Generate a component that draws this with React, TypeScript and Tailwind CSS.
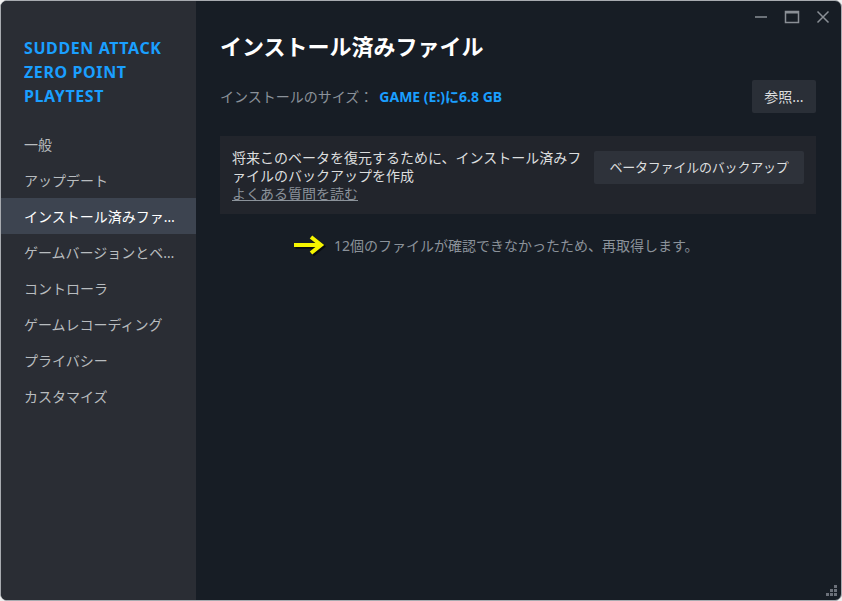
import React from 'react';

const navItems = [
  '一般',
  'アップデート',
  'インストール済みファイル',
  'ゲームバージョンとベータ',
  'コントローラ',
  'ゲームレコーディング',
  'プライバシー',
  'カスタマイズ',
];

const font = { fontFamily: '"Noto Sans", "Noto Sans CJK JP", sans-serif' };

const App = () => {
  return (
    <div className='w-[842px] h-[601px] bg-[#f0f0f0]' style={font}>
      <div className='w-full h-full flex rounded-[7px] overflow-hidden border border-[#a8abb0] bg-[#171d25]'>
        {/* サイドバー */}
        <div className='w-[195px] shrink-0 bg-[#2a2d34] flex flex-col'>
          <div className='pl-[23px] pt-[35px] text-[16px] leading-[24px] font-bold text-[#1a9fff] tracking-[0.6px]'>
            <div>SUDDEN ATTACK</div>
            <div>ZERO POINT</div>
            <div>PLAYTEST</div>
          </div>
          <div className='mt-[18px] flex flex-col'>
            {navItems.map((item, index) => (
              <div
                key={item}
                className={
                  index === 2
                    ? 'h-[36px] flex items-center pl-[23px] pr-[20px] bg-[#3d4450] text-white text-[14px]'
                    : 'h-[36px] flex items-center pl-[23px] pr-[20px] text-[#b8bcbf] text-[14px]'
                }
              >
                <span className='truncate'>{item}</span>
              </div>
            ))}
          </div>
        </div>

        {/* メイン */}
        <div className='flex-1 min-w-0 flex flex-col relative'>
          <div className='absolute top-[7px] right-[9px] flex items-center gap-[13px] text-[#8a8f96]'>
            <svg width='18' height='18' viewBox='0 0 18 18'>
              <line x1='3' y1='9' x2='15' y2='9' stroke='currentColor' strokeWidth='1.5' />
            </svg>
            <svg width='18' height='18' viewBox='0 0 18 18'>
              <rect x='2.5' y='3.5' width='13' height='11' fill='none' stroke='currentColor' strokeWidth='1.5' />
              <line x1='2.5' y1='4.5' x2='15.5' y2='4.5' stroke='currentColor' strokeWidth='2' />
            </svg>
            <svg width='18' height='18' viewBox='0 0 18 18'>
              <path d='M3.5 3.5 L14.5 14.5 M14.5 3.5 L3.5 14.5' stroke='currentColor' strokeWidth='1.5' />
            </svg>
          </div>

          <div className='pl-[24px] pr-[25px] pt-[29px]'>
            <h1 className='text-[22px] leading-[32px] font-bold text-white'>インストール済みファイル</h1>

            <div className='mt-[18px] flex items-center justify-between'>
              <div className='text-[14px] text-[#8b929a] flex items-center'>
                <span>インストールのサイズ：</span>
                <span className='ml-[6px] font-bold text-[#1a9fff]'>GAME (E:)に6.8 GB</span>
              </div>
              <button className='h-[33px] w-[64px] bg-[#2a2f37] rounded-[2px] text-[14px] text-[#dcdedf]'>
                参照...
              </button>
            </div>

            <div className='mt-[23px] h-[78px] bg-[#22252c] flex items-start pl-[12px] pr-[12px] pt-[13px]'>
              <div className='w-[352px] shrink-0 text-[14px] leading-[18px] text-[#dcdedf]'>
                <div>将来このベータを復元するために、インストール済みファイルのバックアップを作成</div>
                <div className='text-[#8b929a] underline'>よくある質問を読む</div>
              </div>
              <button className='ml-auto mt-[2px] h-[33px] w-[210px] whitespace-nowrap shrink-0 bg-[#2e323a] rounded-[2px] text-[13px] tracking-[-0.2px] text-[#dcdedf]'>
                ベータファイルのバックアップ
              </button>
            </div>

            <div className='mt-[19px] flex items-center pl-[72px] gap-[8px]'>
              <svg width='34' height='24' viewBox='0 0 34 24'>
                <path d='M2 12 H28 M19 4 L29 12 L19 20' fill='none' stroke='#000000' strokeOpacity='0.6' strokeWidth='4.5' transform='translate(1.5 1.5)' />
                <path d='M2 12 H28 M19 4 L29 12 L19 20' fill='none' stroke='#f5f500' strokeWidth='4' strokeLinejoin='miter' />
              </svg>
              <span className='text-[14px] text-[#8b929a]'>12個のファイルが確認できなかったため、再取得します。</span>
            </div>
          </div>

          <div className='absolute bottom-[3px] right-[3px]'>
            <svg width='14' height='14' viewBox='0 0 14 14' fill='#6b7079'>
              <rect x='10' y='2' width='3' height='3' />
              <rect x='6' y='6' width='3' height='3' />
              <rect x='10' y='6' width='3' height='3' />
              <rect x='2' y='10' width='3' height='3' />
              <rect x='6' y='10' width='3' height='3' />
              <rect x='10' y='10' width='3' height='3' />
            </svg>
          </div>
        </div>
      </div>
    </div>
  );
};

export default App;
